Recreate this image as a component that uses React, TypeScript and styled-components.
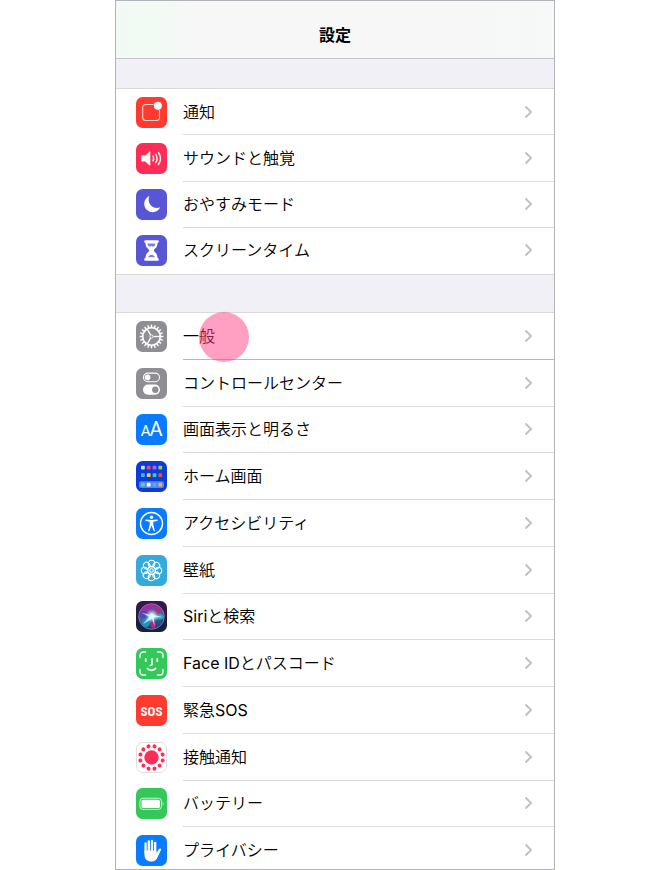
import React from "react";
import styled, { createGlobalStyle } from "styled-components";

const GlobalStyle = createGlobalStyle`
  *, *::before, *::after { box-sizing: border-box; }
  body {
    margin: 0;
    background: #fff;
    color: #111;
    font-family: Inter, "Noto Sans CJK JP", sans-serif;
  }
`;

const Screen = styled.main`
  display: flex;
  flex-direction: column;
  max-width: 440px;
  height: 100vh;
  margin: 0 auto;
  overflow: hidden;
  border: 1px solid #b1b5ba;
  background: #f1f0f6;
`;

const Header = styled.header`
  display: flex;
  flex: none;
  align-items: center;
  justify-content: center;
  height: 58px;
  padding-top: 10px;
  border-bottom: 1px solid #c6c7ca;
  background: linear-gradient(90deg, #f3f9f6 0, #f0fbf3 32px, #f7f7f7 72px, #f7f7f7 360px, #f6f9f7 100%);
`;

const Title = styled.h1`
  margin: 0;
  font-size: 16px;
  line-height: 24px;
  font-weight: 700;
  color: #000;
`;

const Group = styled.ul<{ $gap: number; $height: number }>`
  display: grid;
  flex: none;
  grid-auto-rows: 1fr;
  min-height: ${(p) => p.$height}px;
  margin: ${(p) => p.$gap}px 0 0;
  padding: 0;
  list-style: none;
  border-top: 1px solid #d9d9dd;
  border-bottom: 1px solid #d9d9dd;
  background: #fff;
`;

const Item = styled.li`
  display: grid;
  min-width: 0;
`;

const Row = styled.button`
  display: flex;
  align-items: stretch;
  gap: 16px;
  width: 100%;
  padding: 0 0 0 20px;
  border: 0;
  background: none;
  color: inherit;
  font: inherit;
  text-align: left;
  cursor: pointer;
`;

const Icon = styled.svg`
  flex: none;
  align-self: center;
  width: 31px;
  height: 31px;
`;

const RowBody = styled.span<{ $line: string }>`
  display: flex;
  flex: 1;
  align-items: center;
  justify-content: space-between;
  min-width: 0;
  padding-right: 21px;
  border-bottom: 1px solid ${(p) => p.$line};
`;

const Label = styled.span`
  position: relative;
  font-size: 16px;
  line-height: 24px;
  font-weight: 350;
  color: #000;
`;

const Latin = styled.span`
  font-weight: 400;
`;

const Chevron = styled.svg`
  flex: none;
  width: 9px;
  height: 14px;
`;

const TapMark = styled.span`
  position: absolute;
  top: -12px;
  left: 16px;
  width: 50px;
  height: 50px;
  border-radius: 50%;
  background: rgba(255, 64, 132, 0.5);
  pointer-events: none;
`;

const Tile = ({ fill }: { fill: string }) => <rect width="31" height="31" rx="6.5" fill={fill} />;

const ring = (count: number, offset = 0) =>
  Array.from({ length: count }, (_, i) => offset + (i * 360) / count);

const icons: Record<string, React.ReactNode> = {
  notice: (
    <>
      <Tile fill="#ff3b30" />
      <path d="M17.5 7.5H10a3.3 3.3 0 0 0-3.3 3.3v9.4a3.3 3.3 0 0 0 3.3 3.3h10.2a3.3 3.3 0 0 0 3.3-3.3V13" fill="none" stroke="#ffd5d1" strokeWidth="1.1" />
      <circle cx="21.9" cy="8.8" r="4" fill="#fff" />
    </>
  ),
  sound: (
    <>
      <Tile fill="#ff2d55" />
      <path d="M6.3 12.5h3l4-3.7c.5-.4 1-.2 1 .4v12.6c0 .6-.5.8-1 .4l-4-3.7h-3c-.6 0-1-.4-1-1v-4c0-.6.4-1 1-1Z" fill="#fff" />
      <path d="M17 13q1.5 2.5 0 5M19.7 11.3q2.7 4.2 0 8.4M22.4 9.5q4.2 6 0 12" fill="none" stroke="#fff" strokeWidth="1.4" strokeLinecap="round" />
    </>
  ),
  moon: (
    <>
      <Tile fill="#5856d6" />
      <path d="M13.4 7a8.4 8.4 0 1 0 10.8 11.3c-3 1.1-6.4.9-8.9-1.5C12.5 14.1 12.2 10.4 13.4 7Z" fill="#fff" />
    </>
  ),
  hourglass: (
    <>
      <Tile fill="#5856d6" />
      <path d="M9.5 5.3h12c1 0 1.3.6 1.3 1.3 0 .8-.4 1.3-1.3 1.4 0 4.2-2.2 5.4-3.2 6.4-.7.7-.7 1.5 0 2.2 1 1 3.2 2.2 3.2 6.4.9.1 1.3.6 1.3 1.4 0 .8-.4 1.4-1.3 1.4h-12c-.9 0-1.3-.6-1.3-1.4 0-.8.4-1.3 1.3-1.4 0-4.2 2.2-5.4 3.2-6.4.7-.7.7-1.5 0-2.2-1-1-3.2-2.2-3.2-6.4-.9-.1-1.3-.6-1.3-1.4 0-.7.4-1.3 1.3-1.3Z" fill="#fff" />
      <path d="M11.7 8.5h7.600c0 1.500-.5 2.300-1.300 3h-5c-.8-.7-1.300-1.500-1.300-3ZM15.500 18.500c.4 1.800 2.800 2 3.600 3.800h-7.200c.8-1.800 3.200-2 3.600-3.800Z" fill="#5856d6" opacity=".75" />
      <path d="M15.5 11v9" stroke="#fff" strokeWidth="1" />
    </>
  ),
  gear: (
    <>
      <Tile fill="#8e8e93" />
      {ring(20).map((a) => (
        <path key={a} d="M14.7 6.8 15 3.8h1l.3 3Z" fill="#fff" stroke="#fff" strokeWidth=".3" transform={`rotate(${a} 15.5 15.5)`} />
      ))}
      <circle cx="15.5" cy="15.5" r="8.7" fill="none" stroke="#fff" strokeWidth="1.5" />
      {ring(3, 90).map((a) => (
        <path key={a} d="M15.5 13.6V7" stroke="#fff" strokeWidth="1.3" transform={`rotate(${a} 15.5 15.5)`} />
      ))}
      <circle cx="15.5" cy="15.5" r="1.6" fill="#8e8e93" stroke="#fff" strokeWidth=".9" />
    </>
  ),
  toggles: (
    <>
      <Tile fill="#8e8e93" />
      <rect x="7.5" y="5.1" width="16" height="8.6" rx="4.3" fill="none" stroke="#fff" strokeWidth="1.1" />
      <circle cx="11.6" cy="9.4" r="2.8" fill="#fff" />
      <rect x="7" y="16.6" width="17" height="10.2" rx="5.1" fill="#fff" />
      <circle cx="19.3" cy="21.7" r="3.2" fill="#8e8e93" />
    </>
  ),
  text: (
    <>
      <Tile fill="#0a7aff" />
      <g fill="#fff" fontFamily="Roboto, sans-serif">
        <text x="4.8" y="22" fontSize="15" fontWeight="400">A</text>
        <text x="13.6" y="22" fontSize="20" fontWeight="400">A</text>
      </g>
    </>
  ),
  home: (
    <>
      <Tile fill="#0b3cd8" />
      <rect x="3" y="20.3" width="25" height="6.8" rx="1.8" fill="#5c83e8" />
      {[
        ["#d8d9f0", "#f3476a", "#b05cff", "#8bd450"],
        ["#35b7f4", "#ffc928", "#36d3a1", "#f04747"],
        ["#4fd89b", "#ffffff", "#35bdf7", "#f5a76c"],
      ].map((line, y) =>
        line.map((fill, x) => (
          <rect key={`${x}-${y}`} x={5 + x * 5.8} y={[4.8, 12.2, 21.8][y]} width="3.8" height="3.8" rx=".8" fill={fill} />
        )),
      )}
    </>
  ),
  access: (
    <>
      <Tile fill="#0a7aff" />
      <circle cx="15.5" cy="15.5" r="11" fill="none" stroke="#fff" strokeWidth="1.4" />
      <circle cx="15.5" cy="9.3" r="1.7" fill="#fff" />
      <path d="M9.9 11.6c-.8-.1-.8 1.3 0 1.4l3.800.8v3l-1.500 5.600c-.2.9 1 1.200 1.300.4l2-5.200 2 5.200c.3.8 1.500.5 1.300-.4l-1.500-5.600v-3l3.800-.8c.8-.1.8-1.500 0-1.400-3.700.6-7.500.6-11.200 0Z" fill="#fff" />
    </>
  ),
  flower: (
    <>
      <Tile fill="#34aadc" />
      <g fill="none" stroke="#fff" strokeWidth="1.1">
        {ring(8).map((a) => (
          <circle key={a} cx="15.5" cy="8.6" r="3.3" transform={`rotate(${a} 15.5 15.5)`} />
        ))}
        <circle cx="15.5" cy="15.5" r="4" />
        <circle cx="15.5" cy="15.5" r="1.8" />
      </g>
    </>
  ),
  siri: (
    <>
      <defs>
        <linearGradient id="siriTile" x2="0" y2="1"><stop stopColor="#3b154f" /><stop offset="1" stopColor="#10233f" /></linearGradient>
        <linearGradient id="siriOrb" x1=".35" x2=".65" y2="1"><stop stopColor="#c4179b" /><stop offset=".45" stopColor="#4663aa" /><stop offset="1" stopColor="#173e76" /></linearGradient>
        <radialGradient id="siriGlow"><stop stopColor="#fff" /><stop offset=".3" stopColor="#d5fcff" stopOpacity=".9" /><stop offset="1" stopColor="#65d7ed" stopOpacity="0" /></radialGradient>
      </defs>
      <Tile fill="url(#siriTile)" />
      <circle cx="15.5" cy="15.5" r="12.8" fill="url(#siriOrb)" stroke="#8f87ac" strokeWidth=".8" />
      <path d="M15.5 15.5C10 9 6 8 3.5 12c-1 6 4 6 12 3.5Z" fill="#5541b1" opacity=".9" />
      <path d="M15.5 15.5C7 17 4 20 7 25c5 3 8-1 8.5-9.5Z" fill="#16a9c8" opacity=".75" />
      <path d="M15.5 15.5C22 11 26 12 28 16c-2 4-7 3-12.5-.5Z" fill="#2bbad0" opacity=".8" />
      <path d="M15.5 15.5C19 20 22 25 18 28c-4-1-4-6-2.5-12.5Z" fill="#d11f79" opacity=".85" />
      <path d="M15.5 15.5C18 10 20 4 25 7c2 5-3 8-9.5 8.5Z" fill="#be2770" opacity=".7" />
      <circle cx="16" cy="15" r="7" fill="url(#siriGlow)" />
      <path d="m15.500 12.500 1.400 1.200 9.600 2.300-8.800.4 1 9-2.700-7.500-9 5 6.300-7.200-7.800-4 8.600 2Z" fill="#e9fdff" opacity=".75" />
    </>
  ),
  face: (
    <>
      <Tile fill="#34c759" />
      <g fill="none" stroke="#effff2" strokeWidth="1.4" strokeLinecap="round">
        <path d="M4 9.5V7.2A3.2 3.2 0 0 1 7.2 4H9.5M21.5 4h2.3A3.2 3.2 0 0 1 27 7.2v2.3M27 21.5v2.3a3.2 3.2 0 0 1-3.2 3.2h-2.3M9.5 27H7.2A3.2 3.2 0 0 1 4 23.8v-2.3" />
        <path d="M9.7 11v2.2M21.3 11v2.2M16 11v5.2q0 1.2-1.5 1.2M11.4 20.5q4.1 3.5 8.2 0" strokeWidth="1.8" />
      </g>
    </>
  ),
  sos: (
    <>
      <Tile fill="#ff3b30" />
      <text x="15.5" y="20.5" textAnchor="middle" fill="#fff" fontFamily="'Liberation Sans Narrow', 'Roboto Condensed', Roboto, sans-serif" fontSize="13" fontWeight="700">SOS</text>
    </>
  ),
  exposure: (
    <>
      <rect x=".5" y=".5" width="30" height="30" rx="6.5" fill="#fff" stroke="#dedee0" />
      <circle cx="15.5" cy="15.5" r="7.2" fill="#ff2d55" />
      {ring(12, 15).map((a) => (
        <circle key={a} cx="15.5" cy="4" r="2" fill="#ff2d55" transform={`rotate(${a} 15.5 15.5)`} />
      ))}
    </>
  ),
  battery: (
    <>
      <Tile fill="#34c759" />
      <rect x="3.9" y="10.2" width="21.6" height="11.2" rx="3" fill="none" stroke="#dff8e5" strokeWidth=".9" />
      <rect x="5.5" y="11.7" width="18.4" height="8.2" rx="1.5" fill="#fff" />
      <path d="M26.7 13.8q1.8 2 0 4Z" fill="#dff8e5" />
    </>
  ),
  hand: (
    <>
      <Tile fill="#0a7aff" />
      <g fill="none" stroke="#fff" strokeWidth="2.3" strokeLinecap="round">
        <path d="M9.6 8.5V18M12.8 6.3v12M16 6v12M19.2 7.8v10" />
      </g>
      <path d="M8.45 15.5h11.9v2.7l2.5-4c.7-1.1 2.7-.7 2.1.9l-3 6.5c-1.3 3.3-3.3 5-6.5 5-4.5 0-7-2.8-7-7.1Z" fill="#fff" />
    </>
  ),
};

interface Setting {
  label: React.ReactNode;
  icon: string;
  tapped?: boolean;
}

const alerts: Setting[] = [
  { label: "通知", icon: "notice" },
  { label: "サウンドと触覚", icon: "sound" },
  { label: "おやすみモード", icon: "moon" },
  { label: "スクリーンタイム", icon: "hourglass" },
];

const device: Setting[] = [
  { label: "一般", icon: "gear", tapped: true },
  { label: "コントロールセンター", icon: "toggles" },
  { label: "画面表示と明るさ", icon: "text" },
  { label: "ホーム画面", icon: "home" },
  { label: "アクセシビリティ", icon: "access" },
  { label: "壁紙", icon: "flower" },
  { label: <><Latin>Siri</Latin>と検索</>, icon: "siri" },
  { label: <><Latin>Face ID</Latin>とパスコード</>, icon: "face" },
  { label: <>緊急<Latin>SOS</Latin></>, icon: "sos" },
  { label: "接触通知", icon: "exposure" },
  { label: "バッテリー", icon: "battery" },
  { label: "プライバシー", icon: "hand" },
];

const SettingGroup = ({ items, gap, height }: { items: Setting[]; gap: number; height: number }) => (
  <Group $gap={gap} $height={height}>
    {items.map((item, i) => (
      <Item key={item.icon}>
        <Row type="button">
          <Icon viewBox="0 0 31 31" aria-hidden="true">{icons[item.icon]}</Icon>
          <RowBody $line={i === items.length - 1 ? "transparent" : item.tapped ? "#b8b8ba" : "#dcdcde"}>
            <Label>
              {item.label}
              {item.tapped && <TapMark />}
            </Label>
            <Chevron viewBox="0 0 9 14" aria-hidden="true">
              <path d="m1.5 1.5 5.5 5.5-5.5 5.5" fill="none" stroke="#c2c2c5" strokeWidth="2" />
            </Chevron>
          </RowBody>
        </Row>
      </Item>
    ))}
  </Group>
);

export default function App() {
  return (
    <>
      <GlobalStyle />
      <Screen>
        <Header>
          <Title>設定</Title>
        </Header>
        <SettingGroup items={alerts} gap={29} height={187} />
        <SettingGroup items={device} gap={37} height={563} />
      </Screen>
    </>
  );
}
